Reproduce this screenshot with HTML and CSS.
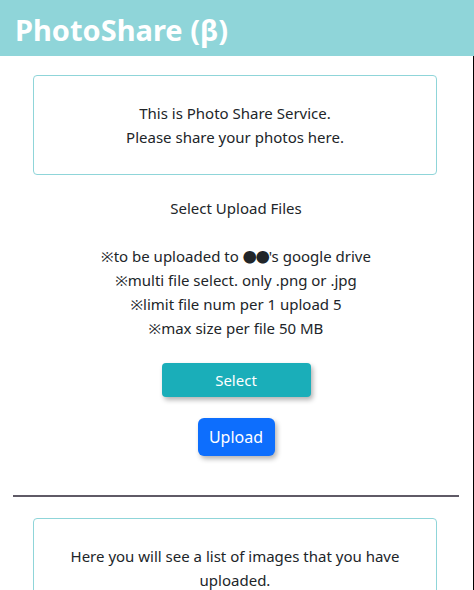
FILE: index.html
```html
<!DOCTYPE html>
<html lang="en">
<head>
<meta charset="utf-8">
<title>PhotoShare</title>
<link rel="stylesheet" href="styles.css">
</head>
<body>
<header class="header">
  <h1 class="title">PhotoShare (β)</h1>
</header>
<main class="main">
  <section class="card intro">
    <p>This is Photo Share Service.<br>Please share your photos here.</p>
  </section>
  <section class="upload">
    <p class="notes">Select Upload Files<br><br>※to be uploaded to <span class="dots">●●</span>'s google drive<br>※multi file select. only .png or .jpg<br>※limit file num per 1 upload 5<br>※max size per file 50 MB</p>
    <button class="btn btn-select" type="button">Select</button>
    <button class="btn btn-upload" type="button">Upload</button>
  </section>
  <hr class="divider">
  <section class="card list">
    <p>Here you will see a list of images that you have uploaded.</p>
  </section>
</main>
</body>
</html>
```
FILE: styles.css
```css
* { box-sizing: border-box; }
html, body { margin: 0; padding: 0; }
body {
  font-family: "Noto Sans", "Open Sans", sans-serif;
  font-size: 15px;
  line-height: 24px;
  color: #212529;
  background: #fff;
  overflow: hidden;
}
.header {
  height: 56px;
  background: #8fd5d9;
  display: flex;
  align-items: center;
  padding: 2px 15px 0;
}
.title {
  margin: 0;
  font-family: "Noto Sans", "Open Sans", sans-serif;
  font-size: 29px;
  font-weight: 700;
  color: #fff;
  line-height: 1;
}
.main {
  border-right: 1px solid #000;
  padding: 19px 14px 0 13px;
  min-height: 534px;
  display: flex;
  flex-direction: column;
}
.card {
  margin: 0 22px 0 20px;
  border: 1px solid #8fd5d9;
  border-radius: 4px;
  text-align: center;
  padding: 25px 16px;
}
.card p { margin: 0; }
.upload {
  display: flex;
  flex-direction: column;
  align-items: center;
  padding-top: 21px;
}
.notes {
  margin: 0;
  text-align: center;
}
.dots {
  font-family: "Noto Sans CJK JP", "DejaVu Sans", sans-serif;
  font-size: 14px;
  letter-spacing: -1px;
}
.btn {
  font-family: "Noto Sans", "Open Sans", sans-serif;
  color: #fff;
  border: none;
  cursor: pointer;
  box-shadow: 2px 3px 5px rgba(0,0,0,0.3);
}
.btn-select {
  margin-top: 23px;
  width: 149px;
  height: 34px;
  background: #1aaeb9;
  border-radius: 4px;
  font-size: 15px;
}
.btn-upload {
  margin-top: 21px;
  width: 77px;
  height: 38px;
  background: #0d6efd;
  border-radius: 6px;
  font-size: 16px;
}
.divider {
  width: 100%;
  margin: 39px 0 21px;
  border: none;
  border-top: 2px solid #5f5a66;
  height: 0;
}
```
